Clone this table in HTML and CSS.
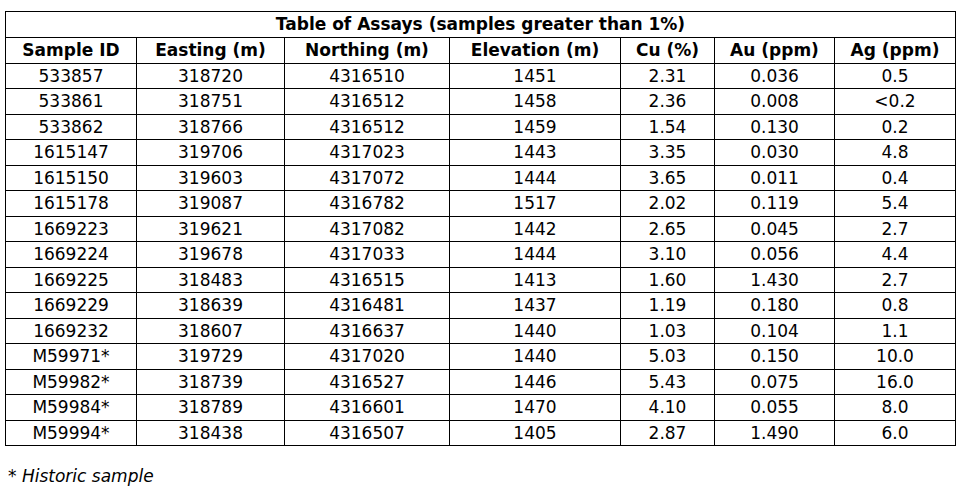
FILE: index.html
```html
<!DOCTYPE html>
<html>
<head>
<meta charset="utf-8">
<link rel="stylesheet" href="styles.css">
</head>
<body>
<div class="page">
<table class="assays">
<colgroup>
<col class="c1"><col class="c2"><col class="c3"><col class="c4"><col class="c5"><col class="c6"><col class="c7">
</colgroup>
<thead>
<tr class="title"><th colspan="7">Table of Assays (samples greater than 1%)</th></tr>
<tr class="head"><th>Sample ID</th><th>Easting (m)</th><th>Northing (m)</th><th>Elevation (m)</th><th>Cu (%)</th><th>Au (ppm)</th><th>Ag (ppm)</th></tr>
</thead>
<tbody>
<tr><td>533857</td><td>318720</td><td>4316510</td><td>1451</td><td>2.31</td><td>0.036</td><td>0.5</td></tr>
<tr><td>533861</td><td>318751</td><td>4316512</td><td>1458</td><td>2.36</td><td>0.008</td><td>&lt;0.2</td></tr>
<tr><td>533862</td><td>318766</td><td>4316512</td><td>1459</td><td>1.54</td><td>0.130</td><td>0.2</td></tr>
<tr><td>1615147</td><td>319706</td><td>4317023</td><td>1443</td><td>3.35</td><td>0.030</td><td>4.8</td></tr>
<tr><td>1615150</td><td>319603</td><td>4317072</td><td>1444</td><td>3.65</td><td>0.011</td><td>0.4</td></tr>
<tr><td>1615178</td><td>319087</td><td>4316782</td><td>1517</td><td>2.02</td><td>0.119</td><td>5.4</td></tr>
<tr><td>1669223</td><td>319621</td><td>4317082</td><td>1442</td><td>2.65</td><td>0.045</td><td>2.7</td></tr>
<tr><td>1669224</td><td>319678</td><td>4317033</td><td>1444</td><td>3.10</td><td>0.056</td><td>4.4</td></tr>
<tr><td>1669225</td><td>318483</td><td>4316515</td><td>1413</td><td>1.60</td><td>1.430</td><td>2.7</td></tr>
<tr><td>1669229</td><td>318639</td><td>4316481</td><td>1437</td><td>1.19</td><td>0.180</td><td>0.8</td></tr>
<tr><td>1669232</td><td>318607</td><td>4316637</td><td>1440</td><td>1.03</td><td>0.104</td><td>1.1</td></tr>
<tr><td>M59971*</td><td>319729</td><td>4317020</td><td>1440</td><td>5.03</td><td>0.150</td><td>10.0</td></tr>
<tr><td>M59982*</td><td>318739</td><td>4316527</td><td>1446</td><td>5.43</td><td>0.075</td><td>16.0</td></tr>
<tr><td>M59984*</td><td>318789</td><td>4316601</td><td>1470</td><td>4.10</td><td>0.055</td><td>8.0</td></tr>
<tr><td>M59994*</td><td>318438</td><td>4316507</td><td>1405</td><td>2.87</td><td>1.490</td><td>6.0</td></tr>
</tbody>
</table>
<p class="note">* Historic sample</p>
</div>
</body>
</html>
```

FILE: styles.css
```css
html, body {
  margin: 0;
  padding: 0;
  background: #ffffff;
}

.page {
  padding: 11px 0 0 5px;
  font-family: "DejaVu Sans", Verdana, sans-serif;
  font-size: 17px;
  line-height: 20px;
  color: #000000;
}

.assays {
  border-collapse: collapse;
  table-layout: fixed;
  width: 950px;
}

.c1 { width: 131px; }
.c2 { width: 148px; }
.c3 { width: 165px; }
.c4 { width: 171px; }
.c5 { width: 94px; }
.c6 { width: 120px; }
.c7 { width: 121px; }

.assays th,
.assays td {
  border: 1px solid #000000;
  padding: 0;
  text-align: center;
  vertical-align: middle;
  white-space: nowrap;
}

.assays th {
  font-weight: bold;
}

.assays tr {
  height: 25.5px;
}

.assays tr.head {
  height: 26px;
}

.note {
  margin: 20px 0 0 3px;
  font-style: italic;
}
```
